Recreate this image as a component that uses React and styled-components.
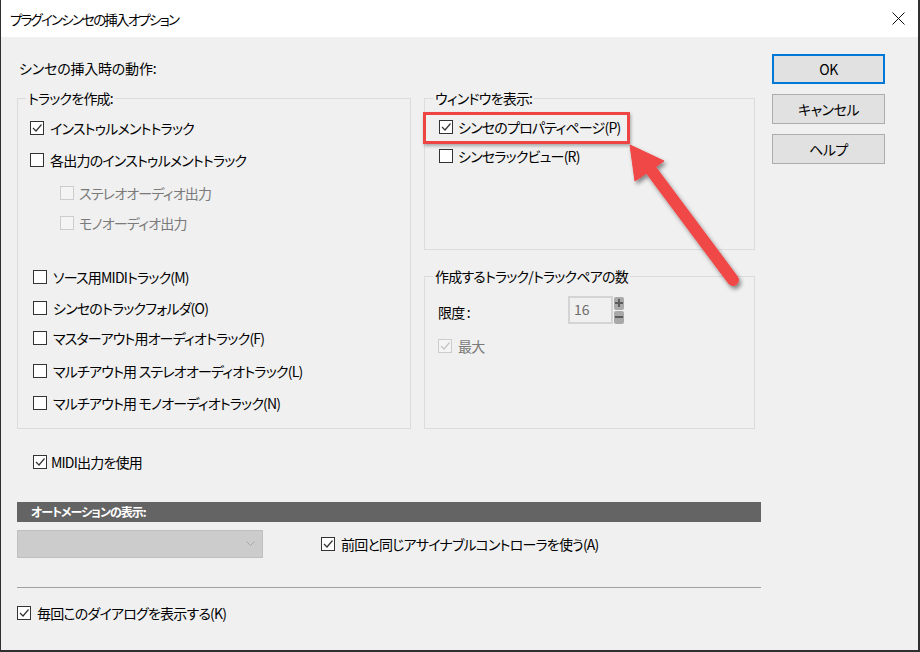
import React from 'react';
import styled, { createGlobalStyle, css } from 'styled-components';

const GlobalStyle = createGlobalStyle`
    html, body {
        margin: 0;
        padding: 0;
        background: #f0f0f0;
    }
    body {
        font-family: "Noto Sans CJK JP", "Noto Sans", sans-serif;
        font-feature-settings: "palt";
        font-size: 14px;
        letter-spacing: -0.8px;
        color: #000;
    }
`;

const Window = styled.div`
    position: relative;
    width: 920px;
    height: 652px;
    box-sizing: border-box;
    background: #f0f0f0;
    border-left: 1px solid #2f2f2f;
    border-right: 2px solid #2f2f2f;
    border-bottom: 2px solid #2f2f2f;
    overflow: hidden;
`;

const TitleBar = styled.div`
    display: flex;
    align-items: center;
    justify-content: space-between;
    height: 37px;
    padding: 0 13px 0 9px;
    background: #fff;
`;

const Title = styled.span`
    font-size: 13.5px;
    letter-spacing: -1.8px;
`;

const Body = styled.div`
    display: flex;
    padding-left: 16px;
`;

const MainColumn = styled.div`
    width: 744px;
    padding-top: 21px;
    display: flex;
    flex-direction: column;
`;

const Heading = styled.div`
    line-height: 20px;
    height: 20px;
    margin-left: 2px;
    letter-spacing: -0.2px;
`;

const Groups = styled.div`
    display: grid;
    grid-template-columns: 394px 331px;
    column-gap: 13px;
    margin-top: 20px;
`;

const SideColumn = styled.div`
    display: flex;
    flex-direction: column;
`;

const GroupBox = styled.div`
    display: flex;
    flex-direction: column;
    box-sizing: border-box;
    border: 1px solid #dcdcdc;
    padding-bottom: ${p => p.$pb || 0}px;
    ${p => p.$height && css`height: ${p.$height}px;`}
    ${p => p.$grow && css`flex: 1;`}
    ${p => p.$mt && css`margin-top: ${p.$mt}px;`}
`;

const Legend = styled.div`
    align-self: flex-start;
    margin: -11px 0 0 8px;
    padding: 0 2px;
    line-height: 20px;
    height: 20px;
    background: #f0f0f0;
`;

const Option = styled.div`
    position: relative;
    display: flex;
    align-items: center;
    height: 20px;
    line-height: 20px;
    margin-top: ${p => p.$mt || 0}px;
    margin-left: ${p => p.$indent || 0}px;
    gap: ${p => (p.$gap === undefined ? 6 : p.$gap)}px;
    color: ${p => (p.$disabled ? '#7a7a7a' : '#000')};
    white-space: nowrap;

    ${p => p.$highlight && css`
        &::before {
            content: '';
            position: absolute;
            left: -16px;
            top: -5px;
            width: 207px;
            height: 32px;
            box-sizing: border-box;
            border: 3px solid #ee4444;
            box-shadow: 1px 2px 3px rgba(0, 0, 0, 0.3);
        }
    `}
`;

const Box = styled.span`
    display: flex;
    align-items: center;
    justify-content: center;
    flex: none;
    width: 14px;
    height: 14px;
    box-sizing: border-box;
    border: 1px solid ${p => (p.$disabled ? '#cccccc' : '#333333')};
    background: ${p => (p.$disabled ? '#f4f4f4' : '#ffffff')};
`;

const Check = ({ checked, disabled }) => (
    <Box $disabled={disabled}>
        {checked && (
            <svg width="12" height="12" viewBox="0 0 12 12">
                <polyline
                    points="2,6 5,9 10.5,2.5"
                    fill="none"
                    stroke={disabled ? '#c4c4c4' : '#333'}
                    strokeWidth="1.2"
                />
            </svg>
        )}
    </Box>
);

const LimitRow = styled.div`
    display: flex;
    align-items: center;
    height: 28px;
    margin: 10px 0 0 13px;
`;

const LimitLabel = styled.span`
    width: 130px;
    line-height: 20px;
    padding-top: 4px;
`;

const NumberField = styled.div`
    width: 45px;
    height: 28px;
    box-sizing: border-box;
    border: 2px solid #d4d4d4;
    background: #f0f0f0;
    color: #6d6d6d;
    padding-left: 4px;
    line-height: 22px;
    letter-spacing: 0;
`;

const Spin = styled.div`
    display: flex;
    flex-direction: column;
    gap: 1px;
    margin-left: 1px;
`;

const SpinButton = styled.div`
    width: 10px;
    height: 13px;
    border-radius: 2px;
    background: #a9a9a9;
    display: flex;
    align-items: center;
    justify-content: center;
`;

const ButtonColumn = styled.div`
    display: flex;
    flex-direction: column;
    gap: 10px;
    margin-left: 11px;
    padding-top: 17px;
`;

const Button = styled.div`
    width: 113px;
    height: 30px;
    box-sizing: border-box;
    display: flex;
    align-items: center;
    justify-content: center;
    background: #e1e1e1;
    border: ${p => (p.$default ? '2px solid #0078d7' : '1px solid #adadad')};
    letter-spacing: -0.5px;
`;

const SectionBar = styled.div`
    height: 20px;
    margin-top: 30px;
    background: #646464;
    color: #fff;
    font-size: 12px;
    font-weight: bold;
    letter-spacing: -1px;
    line-height: 20px;
    padding-left: 14px;
`;

const AutomationRow = styled.div`
    display: flex;
    align-items: center;
    margin-top: 8px;
`;

const Dropdown = styled.div`
    width: 246px;
    height: 28px;
    box-sizing: border-box;
    border: 1px solid #bfbfbf;
    background: #cccccc;
    display: flex;
    align-items: center;
    justify-content: flex-end;
    padding-right: 7px;
    margin-right: 58px;
`;

const Separator = styled.div`
    height: 1px;
    margin-top: 29px;
    background: #a0a0a0;
`;

const Arrow = styled.svg`
    position: absolute;
    left: 0;
    top: 0;
    pointer-events: none;
`;

const trackOptions = [
    { label: 'インストゥルメントトラック', checked: true, indent: 12, mt: 10 },
    { label: '各出力のインストゥルメントトラック', indent: 12, mt: 12 },
    { label: 'ステレオオーディオ出力', indent: 42, mt: 13, disabled: true, gap: 5 },
    { label: 'モノオーディオ出力', indent: 42, mt: 10, disabled: true, gap: 5 },
    { label: 'ソース用MIDIトラック(M)', indent: 15, mt: 34 },
    { label: 'シンセのトラックフォルダ(O)', indent: 15, mt: 11 },
    { label: 'マスターアウト用オーディオトラック(F)', indent: 15, mt: 10 },
    { label: 'マルチアウト用 ステレオオーディオトラック(L)', indent: 15, mt: 13 },
    { label: 'マルチアウト用 モノオーディオトラック(N)', indent: 15, mt: 12 },
];

const App = () => {
    return (
        <>
            <GlobalStyle />
            <Window>
                <TitleBar>
                    <Title>プラグインシンセの挿入オプション</Title>
                    <svg width="13" height="13" viewBox="0 0 13 13">
                        <path d="M0.5 0.5 L12.5 12.5 M12.5 0.5 L0.5 12.5" stroke="#111" strokeWidth="1" />
                    </svg>
                </TitleBar>
                <Body>
                    <MainColumn>
                        <Heading>シンセの挿入時の動作:</Heading>
                        <Groups>
                            <GroupBox $pb={15}>
                                <Legend>トラックを作成:</Legend>
                                {trackOptions.map(opt => (
                                    <Option
                                        key={opt.label}
                                        $mt={opt.mt}
                                        $indent={opt.indent}
                                        $gap={opt.gap}
                                        $disabled={opt.disabled}
                                    >
                                        <Check checked={opt.checked} disabled={opt.disabled} />
                                        {opt.label}
                                    </Option>
                                ))}
                            </GroupBox>
                            <SideColumn>
                                <GroupBox $height={152}>
                                    <Legend>ウィンドウを表示:</Legend>
                                    <Option $mt={9} $indent={14} $gap={5} $highlight>
                                        <Check checked />
                                        シンセのプロパティページ(P)
                                    </Option>
                                    <Option $mt={9} $indent={14} $gap={5}>
                                        <Check />
                                        シンセラックビュー(R)
                                    </Option>
                                </GroupBox>
                                <GroupBox $grow $mt={26}>
                                    <Legend>作成するトラック/トラックペアの数</Legend>
                                    <LimitRow>
                                        <LimitLabel>限度 :</LimitLabel>
                                        <NumberField>16</NumberField>
                                        <Spin>
                                            <SpinButton>
                                                <svg width="8" height="8" viewBox="0 0 8 8">
                                                    <path d="M0 4 H8 M4 0 V8" stroke="#5c5c5c" strokeWidth="2" />
                                                </svg>
                                            </SpinButton>
                                            <SpinButton>
                                                <svg width="8" height="8" viewBox="0 0 8 8">
                                                    <path d="M0 4 H8" stroke="#5c5c5c" strokeWidth="2" />
                                                </svg>
                                            </SpinButton>
                                        </Spin>
                                    </LimitRow>
                                    <Option $mt={12} $indent={13} $disabled>
                                        <Check checked disabled />
                                        最大
                                    </Option>
                                </GroupBox>
                            </SideColumn>
                        </Groups>
                        <Option $mt={23} $indent={16} $gap={4}>
                            <Check checked />
                            MIDI出力を使用
                        </Option>
                        <SectionBar>オートメーションの表示:</SectionBar>
                        <AutomationRow>
                            <Dropdown>
                                <svg width="9" height="6" viewBox="0 0 9 6">
                                    <polyline points="0.5,0.5 4.5,4.5 8.5,0.5" fill="none" stroke="#a8a8a8" strokeWidth="1" />
                                </svg>
                            </Dropdown>
                            <Option>
                                <Check checked />
                                前回と同じアサイナブルコントローラを使う(A)
                            </Option>
                        </AutomationRow>
                        <Separator />
                        <Option $mt={15}>
                            <Check checked />
                            毎回このダイアログを表示する(K)
                        </Option>
                    </MainColumn>
                    <ButtonColumn>
                        <Button $default>OK</Button>
                        <Button>キャンセル</Button>
                        <Button>ヘルプ</Button>
                    </ButtonColumn>
                </Body>
                <Arrow width="920" height="652" viewBox="0 0 920 652">
                    <defs>
                        <filter id="arrowShadow" x="-20%" y="-20%" width="140%" height="140%">
                            <feDropShadow dx="2" dy="3" stdDeviation="2" floodColor="#000" floodOpacity="0.45" />
                        </filter>
                    </defs>
                    <g filter="url(#arrowShadow)" fill="#f04646" stroke="#f04646">
                        <line x1="732" y1="280" x2="650" y2="170" strokeWidth="12" strokeLinecap="round" />
                        <polygon points="629,145 663,161 634,181" strokeWidth="1" strokeLinejoin="round" />
                    </g>
                </Arrow>
            </Window>
        </>
    );
};

export default App;
